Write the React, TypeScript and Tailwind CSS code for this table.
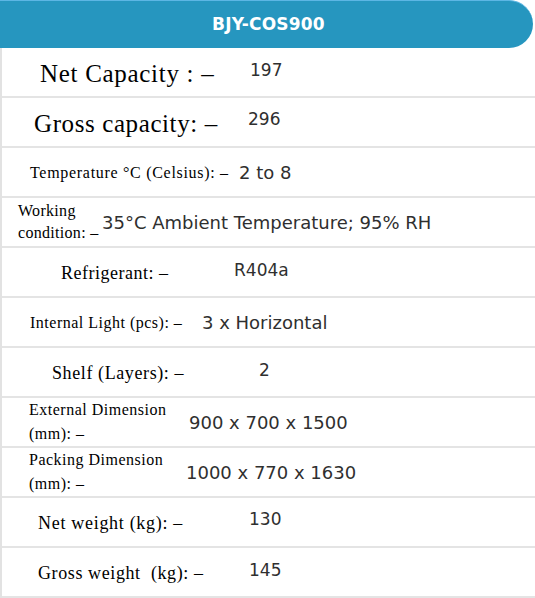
type Spec = {
  label: string[];
  value: string;
  col: string;
  labelCls: string;
  valueCls: string;
};

const rows: Spec[] = [
  { label: ['Net Capacity : –'], value: '197', col: 'w-[248px]', labelCls: 'pl-[38px] text-[25px] tracking-[0.7px] pt-[4px]', valueCls: 'text-[17px] -mt-[2px]' },
  { label: ['Gross capacity: –'], value: '296', col: 'w-[246px]', labelCls: 'pl-[32px] text-[25px] tracking-[0.6px] pt-[4px]', valueCls: 'text-[17px] -mt-[4px]' },
  { label: ['Temperature °C (Celsius): –'], value: '2 to 8', col: 'w-[237px]', labelCls: 'pl-[28px] text-[16px] tracking-[0.7px] pt-[2px]', valueCls: 'text-[18px]' },
  { label: ['Working', 'condition: –'], value: '35°C Ambient Temperature; 95% RH', col: 'w-[100px]', labelCls: 'pl-[16px] text-[16px] tracking-[0.3px] leading-[22px]', valueCls: 'text-[18px]' },
  { label: ['Refrigerant: –'], value: 'R404a', col: 'w-[232px]', labelCls: 'pl-[59px] text-[18px] tracking-[0.5px] pt-[2px]', valueCls: 'text-[17px] -mt-[2px]' },
  { label: ['Internal Light (pcs): –'], value: '3 x Horizontal', col: 'w-[200px]', labelCls: 'pl-[28px] text-[16px] tracking-[0.5px] pt-[2px]', valueCls: 'text-[18px]' },
  { label: ['Shelf (Layers): –'], value: '2', col: 'w-[257px]', labelCls: 'pl-[50px] text-[18px] tracking-[0.6px] pt-[3px]', valueCls: 'text-[17px] -mt-[2px]' },
  { label: ['External Dimension', '(mm): –'], value: '900 x 700 x 1500', col: 'w-[187px]', labelCls: 'pl-[27px] text-[16px] tracking-[0.5px] leading-[24px]', valueCls: 'text-[18px]' },
  { label: ['Packing Dimension', '(mm): –'], value: '1000 x 770 x 1630', col: 'w-[184px]', labelCls: 'pl-[27px] text-[16px] tracking-[0.5px] leading-[24px]', valueCls: 'text-[18px]' },
  { label: ['Net weight (kg): –'], value: '130', col: 'w-[247px]', labelCls: 'pl-[36px] text-[18px] tracking-[0.7px] pt-[3px]', valueCls: 'text-[17px] -mt-[5px]' },
  { label: ['Gross weight  (kg): –'], value: '145', col: 'w-[247px]', labelCls: 'pl-[36px] text-[18px] tracking-[0.6px] pt-[3px]', valueCls: 'text-[17px] -mt-[3px]' },
];

const serif = "font-['Liberation_Serif',serif]";
const sans = "font-['DejaVu_Sans',sans-serif]";

export default function App() {
  return (
    <div className="w-[535px] h-[598px] bg-white overflow-hidden">
      <div className="w-[533px] h-[48px] bg-[#2696bf] border-t border-[#5cb6e4] rounded-r-[24px] flex items-center justify-center">
        <span className={`${sans} font-bold text-[17px] text-white pl-[4px] tracking-[0.2px]`}>BJY-COS900</span>
      </div>
      <div className="border-l-2 border-[#e2e2e2]">
        {rows.map((r, i) => (
          <div key={i} className="h-[50px] flex items-center border-b-2 border-[#e4e4e4]">
            <div className={`${r.col} shrink-0`}>
              <div className={`${serif} ${r.labelCls} text-black whitespace-pre`}>
                {r.label.map((l, j) => (
                  <div key={j}>{l}</div>
                ))}
              </div>
            </div>
            <div className={`${sans} ${r.valueCls} text-[#2f2f2f] whitespace-nowrap`}>{r.value}</div>
          </div>
        ))}
      </div>
    </div>
  );
}
